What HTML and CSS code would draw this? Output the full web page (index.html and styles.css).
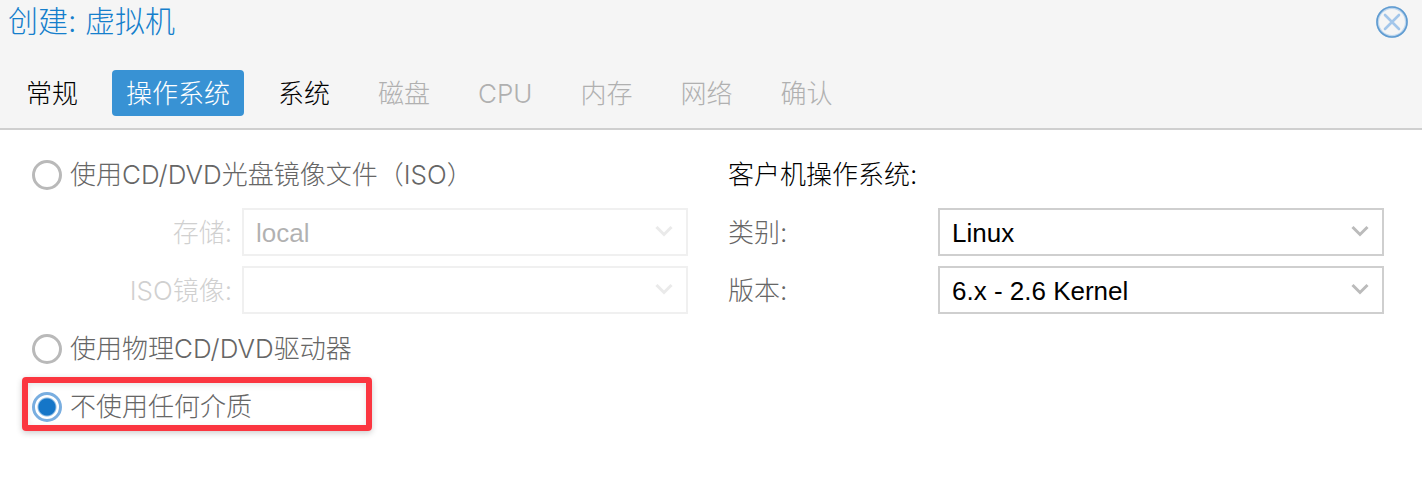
FILE: index.html
```html
<!DOCTYPE html>
<html lang="zh-CN">
<head>
    <meta charset="UTF-8">
    <meta name="viewport" content="width=device-width, initial-scale=1.0">
    <title>创建: 虚拟机</title>
    <link rel="stylesheet" href="styles.css">
</head>
<body>
    <header class="header">
        <div class="title-bar">
            <h1>创建: 虚拟机</h1>
            <button type="button" class="close" aria-label="关闭">
                <svg width="32" height="32" viewBox="0 0 32 32" fill="none">
                    <circle cx="16" cy="16" r="14.5" stroke="#bdd6ee" stroke-width="3"/>
                    <circle cx="16" cy="16" r="15" stroke="#5f9bd0" stroke-width="1.6"/>
                    <path d="M9 9l14 14M23 9L9 23" stroke="#a3c6ea" stroke-width="2.6" stroke-linecap="round"/>
                </svg>
            </button>
        </div>
        <nav class="tabs">
            <button type="button" class="tab">常规</button>
            <button type="button" class="tab active">操作系统</button>
            <button type="button" class="tab">系统</button>
            <button type="button" class="tab" disabled>磁盘</button>
            <button type="button" class="tab" disabled>CPU</button>
            <button type="button" class="tab" disabled>内存</button>
            <button type="button" class="tab" disabled>网络</button>
            <button type="button" class="tab" disabled>确认</button>
        </nav>
    </header>

    <form class="panel">
        <div class="column">
            <div class="row">
                <input type="radio" name="media" id="media-iso">
                <label for="media-iso">使用CD/DVD光盘镜像文件（ISO）</label>
            </div>
            <div class="row disabled">
                <label class="field-label right" for="storage">存储:</label>
                <div class="select-box">
                    <select id="storage" disabled><option>local</option></select>
                    <svg class="arrow" width="18" height="12" viewBox="0 0 18 12"><path d="M1.5 2L9 9.5L16.5 2"/></svg>
                </div>
            </div>
            <div class="row disabled">
                <label class="field-label right" for="iso">ISO镜像:</label>
                <div class="select-box">
                    <select id="iso" disabled><option></option></select>
                    <svg class="arrow" width="18" height="12" viewBox="0 0 18 12"><path d="M1.5 2L9 9.5L16.5 2"/></svg>
                </div>
            </div>
            <div class="row">
                <input type="radio" name="media" id="media-cdrom">
                <label for="media-cdrom">使用物理CD/DVD驱动器</label>
            </div>
            <div class="row marked">
                <input type="radio" name="media" id="media-none" checked>
                <label for="media-none">不使用任何介质</label>
            </div>
        </div>

        <div class="column">
            <div class="row"><span class="heading">客户机操作系统:</span></div>
            <div class="row">
                <label class="field-label" for="os-type">类别:</label>
                <div class="select-box">
                    <select id="os-type"><option>Linux</option></select>
                    <svg class="arrow" width="18" height="12" viewBox="0 0 18 12"><path d="M1.5 2L9 9.5L16.5 2"/></svg>
                </div>
            </div>
            <div class="row">
                <label class="field-label" for="os-version">版本:</label>
                <div class="select-box">
                    <select id="os-version"><option>6.x - 2.6 Kernel</option></select>
                    <svg class="arrow" width="18" height="12" viewBox="0 0 18 12"><path d="M1.5 2L9 9.5L16.5 2"/></svg>
                </div>
            </div>
        </div>
    </form>
</body>
</html>
```
FILE: styles.css
```css
*,
*::after {
    box-sizing: border-box;
}

body {
    margin: 0;
    background-color: #fff;
    color: #666;
    font-family: Inter, "Noto Sans CJK SC", sans-serif;
    font-size: 26px;
    font-weight: 300;
    line-height: 38px;
}

button,
select {
    font: inherit;
}

.header {
    background-color: #f5f5f5;
    border-bottom: 2px solid #cfcfcf;
    padding-bottom: 12px;
}

.title-bar {
    display: flex;
    justify-content: space-between;
    align-items: center;
    height: 44px;
    padding: 0 14px 0 8px;
}

h1 {
    margin: 0 0 2px;
    color: #157fcc;
    font-size: 30px;
    font-weight: 300;
}

.close {
    display: flex;
    padding: 0;
    border: none;
    background: none;
    cursor: pointer;
}

.tabs {
    display: flex;
    gap: 20px;
    padding: 26px 12px 0;
}

.tab {
    padding: 5px 14px 3px;
    border: none;
    border-radius: 4px;
    background: none;
    color: #000;
    cursor: pointer;
}

.tab.active {
    background-color: #3892d4;
    color: #fff;
}

.tab:disabled {
    color: #b0b0b0;
    cursor: default;
}

.panel {
    display: grid;
    grid-template-columns: 1fr 1fr;
    gap: 40px;
    padding: 20px 38px 20px 32px;
}

.column {
    display: flex;
    flex-direction: column;
    gap: 10px;
}

.row {
    display: flex;
    align-items: center;
    position: relative;
    height: 48px;
}

.row label,
.heading {
    margin-top: 2px;
}

.heading {
    color: #000;
}

.disabled {
    opacity: 0.3;
}

.field-label {
    flex: 0 0 210px;
}

.field-label.right {
    padding-right: 10px;
    text-align: right;
}

input[type="radio"] {
    appearance: none;
    width: 30px;
    height: 30px;
    margin: 2px 8px 0 0;
    border: 3px solid #b9b9b9;
    border-radius: 50%;
    background-color: #fff;
}

input[type="radio"]:checked {
    border-color: #79aee0;
    background: radial-gradient(circle, #1576c8 8px, #fff 10px);
}

.select-box {
    flex: 1;
    position: relative;
}

select {
    display: block;
    appearance: none;
    width: 100%;
    height: 48px;
    padding: 2px 50px 0 12px;
    border: 2px solid #cfcfcf;
    border-radius: 0;
    background-color: #fff;
    color: #000;
    font-family: "Liberation Sans", "Noto Sans CJK SC", sans-serif;
    opacity: 1;
}

.arrow {
    position: absolute;
    top: 17px;
    right: 15px;
    fill: none;
    stroke: #bbb;
    stroke-width: 3;
    pointer-events: none;
}

/* red frame round the chosen option */
.marked::after {
    content: "";
    position: absolute;
    top: -5px;
    left: -10px;
    width: 350px;
    height: 54px;
    border: 6px solid #fb3640;
    border-radius: 4px;
    box-shadow: 0 2px 6px rgba(0, 0, 0, 0.2), inset 0 2px 6px rgba(0, 0, 0, 0.1);
    pointer-events: none;
}
```
